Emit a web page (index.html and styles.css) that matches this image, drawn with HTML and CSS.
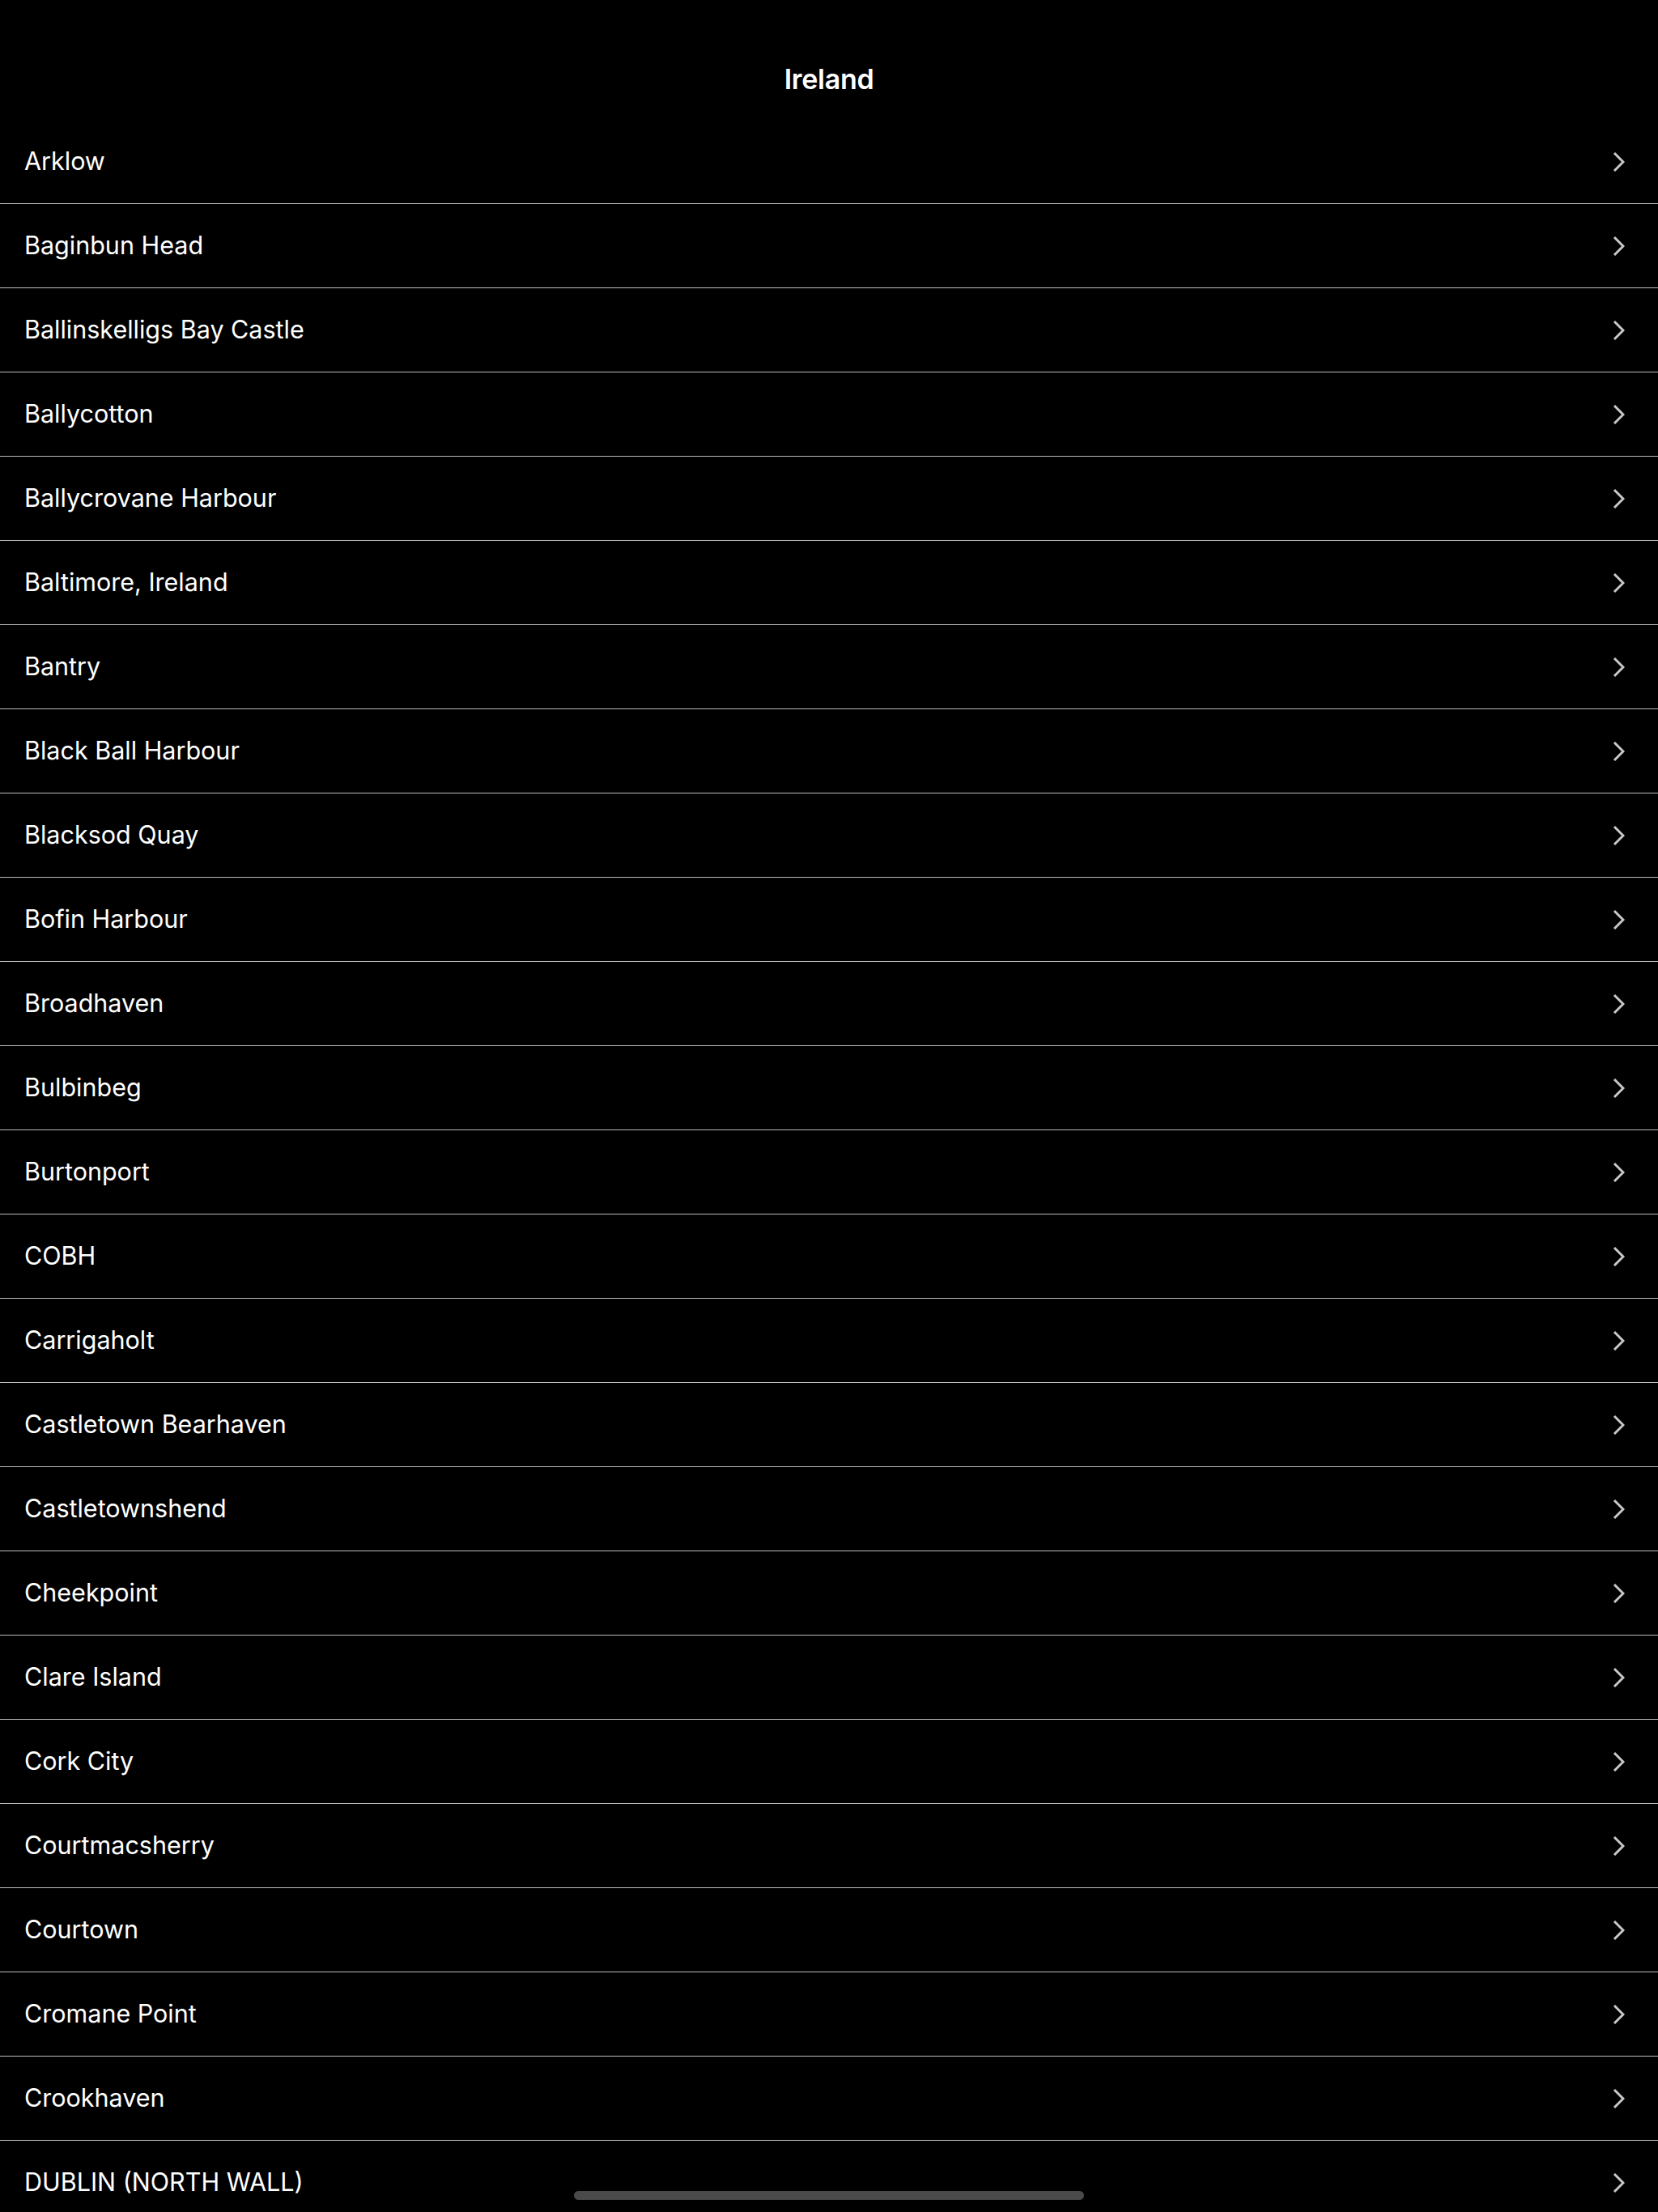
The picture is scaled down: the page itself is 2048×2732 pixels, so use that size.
FILE: index.html
```html
<!DOCTYPE html>
<html lang="en">
<head>
<meta charset="utf-8">
<title>Ireland</title>
<link rel="stylesheet" href="styles.css">
</head>
<body>
<div class="screen">
  <header class="nav"><h1 class="nav-title">Ireland</h1></header>
  <ul class="list">
    <li class="row"><span class="label">Arklow</span><svg class="chev" viewBox="0 0 15 26"><path d="M2 2 L13 13 L2 24"/></svg></li>
    <li class="row"><span class="label">Baginbun Head</span><svg class="chev" viewBox="0 0 15 26"><path d="M2 2 L13 13 L2 24"/></svg></li>
    <li class="row"><span class="label">Ballinskelligs Bay Castle</span><svg class="chev" viewBox="0 0 15 26"><path d="M2 2 L13 13 L2 24"/></svg></li>
    <li class="row"><span class="label">Ballycotton</span><svg class="chev" viewBox="0 0 15 26"><path d="M2 2 L13 13 L2 24"/></svg></li>
    <li class="row"><span class="label">Ballycrovane Harbour</span><svg class="chev" viewBox="0 0 15 26"><path d="M2 2 L13 13 L2 24"/></svg></li>
    <li class="row"><span class="label">Baltimore, Ireland</span><svg class="chev" viewBox="0 0 15 26"><path d="M2 2 L13 13 L2 24"/></svg></li>
    <li class="row"><span class="label">Bantry</span><svg class="chev" viewBox="0 0 15 26"><path d="M2 2 L13 13 L2 24"/></svg></li>
    <li class="row"><span class="label">Black Ball Harbour</span><svg class="chev" viewBox="0 0 15 26"><path d="M2 2 L13 13 L2 24"/></svg></li>
    <li class="row"><span class="label">Blacksod Quay</span><svg class="chev" viewBox="0 0 15 26"><path d="M2 2 L13 13 L2 24"/></svg></li>
    <li class="row"><span class="label">Bofin Harbour</span><svg class="chev" viewBox="0 0 15 26"><path d="M2 2 L13 13 L2 24"/></svg></li>
    <li class="row"><span class="label">Broadhaven</span><svg class="chev" viewBox="0 0 15 26"><path d="M2 2 L13 13 L2 24"/></svg></li>
    <li class="row"><span class="label">Bulbinbeg</span><svg class="chev" viewBox="0 0 15 26"><path d="M2 2 L13 13 L2 24"/></svg></li>
    <li class="row"><span class="label">Burtonport</span><svg class="chev" viewBox="0 0 15 26"><path d="M2 2 L13 13 L2 24"/></svg></li>
    <li class="row"><span class="label">COBH</span><svg class="chev" viewBox="0 0 15 26"><path d="M2 2 L13 13 L2 24"/></svg></li>
    <li class="row"><span class="label">Carrigaholt</span><svg class="chev" viewBox="0 0 15 26"><path d="M2 2 L13 13 L2 24"/></svg></li>
    <li class="row"><span class="label">Castletown Bearhaven</span><svg class="chev" viewBox="0 0 15 26"><path d="M2 2 L13 13 L2 24"/></svg></li>
    <li class="row"><span class="label">Castletownshend</span><svg class="chev" viewBox="0 0 15 26"><path d="M2 2 L13 13 L2 24"/></svg></li>
    <li class="row"><span class="label">Cheekpoint</span><svg class="chev" viewBox="0 0 15 26"><path d="M2 2 L13 13 L2 24"/></svg></li>
    <li class="row"><span class="label">Clare Island</span><svg class="chev" viewBox="0 0 15 26"><path d="M2 2 L13 13 L2 24"/></svg></li>
    <li class="row"><span class="label">Cork City</span><svg class="chev" viewBox="0 0 15 26"><path d="M2 2 L13 13 L2 24"/></svg></li>
    <li class="row"><span class="label">Courtmacsherry</span><svg class="chev" viewBox="0 0 15 26"><path d="M2 2 L13 13 L2 24"/></svg></li>
    <li class="row"><span class="label">Courtown</span><svg class="chev" viewBox="0 0 15 26"><path d="M2 2 L13 13 L2 24"/></svg></li>
    <li class="row"><span class="label">Cromane Point</span><svg class="chev" viewBox="0 0 15 26"><path d="M2 2 L13 13 L2 24"/></svg></li>
    <li class="row"><span class="label">Crookhaven</span><svg class="chev" viewBox="0 0 15 26"><path d="M2 2 L13 13 L2 24"/></svg></li>
    <li class="row"><span class="label">DUBLIN (NORTH WALL)</span><svg class="chev" viewBox="0 0 15 26"><path d="M2 2 L13 13 L2 24"/></svg></li>
  </ul>
  <div class="home-indicator"></div>
</div>
</body>
</html>
```

FILE: styles.css
```css
html, body {
  margin: 0;
  padding: 0;
  background: #000;
}
.screen {
  position: relative;
  width: 2048px;
  height: 2732px;
  overflow: hidden;
  background: #000;
  color: #fff;
  font-family: Inter, "Noto Sans", sans-serif;
}
.nav {
  height: 148px;
  display: flex;
  justify-content: center;
  align-items: flex-start;
  box-sizing: border-box;
  padding-top: 78px;
}
.nav-title {
  margin: 0;
  font-size: 34px;
  font-weight: 600;
  line-height: 40px;
  letter-spacing: -0.3px;
}
.list {
  list-style: none;
  margin: 0;
  padding: 0;
}
.row {
  height: 104px;
  box-sizing: border-box;
  border-bottom: 1px solid #bdbdbd;
  display: flex;
  align-items: center;
  justify-content: space-between;
  padding: 0 41px 0 30px;
}
.label {
  font-size: 30.5px;
  font-weight: 400;
  letter-spacing: 0;
  line-height: 40px;
  margin-top: -2px;
}
.chev {
  width: 15px;
  height: 26px;
  fill: none;
  stroke: #c8c8c8;
  stroke-width: 3;
  stroke-linecap: butt;
  stroke-linejoin: miter;
}
.home-indicator {
  position: absolute;
  left: 709px;
  bottom: 15px;
  width: 630px;
  height: 11px;
  border-radius: 6px;
  background: #4a4a4a;
}
```
